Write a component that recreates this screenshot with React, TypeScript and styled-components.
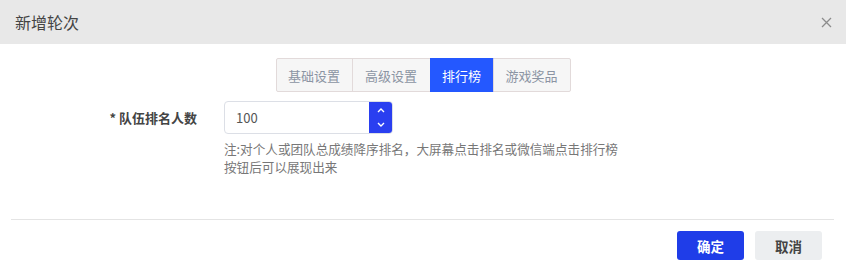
import React from "react";
import styled, { createGlobalStyle } from "styled-components";

const Global = createGlobalStyle`
  html, body { margin: 0; padding: 0; background: #fff; }
  body { font-family: "Noto Sans CJK SC", "Noto Sans", sans-serif; }
  * { box-sizing: border-box; }
`;

const Dialog = styled.div`
  width: 846px;
  height: 273px;
  background: #fff;
  display: flex;
  flex-direction: column;
`;

const Header = styled.div`
  height: 44px;
  background: #e8e8e8;
  display: flex;
  align-items: center;
  justify-content: space-between;
  padding: 0 14px 0 15px;
`;

const Title = styled.div`
  font-size: 16px;
  color: #444;
`;

const CloseBtn = styled.div`
  width: 12px;
  height: 12px;
  display: flex;
  align-items: center;
  justify-content: center;
`;

const Body = styled.div`
  display: flex;
  flex-direction: column;
  padding-top: 14px;
  flex: 1;
`;

const Tabs = styled.div`
  display: flex;
  justify-content: center;
  padding-left: 1px;
`;

const Tab = styled.div<{ $active?: boolean; $w: number }>`
  width: ${(p) => p.$w}px;
  height: 34px;
  display: flex;
  align-items: center;
  justify-content: center;
  font-size: 13px;
  color: ${(p) => (p.$active ? "#fff" : "#8b94a3")};
  background: ${(p) => (p.$active ? "#2458ff" : "#f6f6f6")};
  border: 1px solid ${(p) => (p.$active ? "#2458ff" : "#e2dada")};
  margin-left: -1px;
  &:first-child { border-radius: 2px 0 0 2px; }
  &:last-child { border-radius: 0 2px 2px 0; }
`;

const FormRow = styled.div`
  display: flex;
  margin-top: 9px;
`;

const Label = styled.div`
  width: 224px;
  padding-right: 27px;
  height: 33px;
  display: flex;
  align-items: center;
  justify-content: flex-end;
  font-size: 13px;
  font-weight: bold;
  color: #444;
`;

const FieldCol = styled.div`
  display: flex;
  flex-direction: column;
`;

const NumberInput = styled.div`
  width: 169px;
  height: 33px;
  display: flex;
  border: 1px solid #dcdfe6;
  border-radius: 4px;
  overflow: hidden;
`;

const InputText = styled.div`
  flex: 1;
  display: flex;
  align-items: center;
  padding-left: 11px;
  font-size: 13px;
  color: #555;
`;

const Spinner = styled.div`
  width: 24px;
  margin: -1px -1px -1px 0;
  background: #2a3ff0;
  border-radius: 0 4px 4px 0;
  display: flex;
  flex-direction: column;
  align-items: center;
  justify-content: space-around;
  padding: 3px 0;
`;

const Note = styled.div`
  margin-top: 6px;
  font-size: 12.6px;
  line-height: 18px;
  color: #777;
`;

const Divider = styled.div`
  margin: auto 12px 0 11px;
  height: 1px;
  background: #e4e4e4;
`;

const Footer = styled.div`
  display: flex;
  justify-content: flex-end;
  gap: 11px;
  padding: 11px 24px 13px 0;
`;

const Button = styled.div<{ $primary?: boolean }>`
  width: 67px;
  height: 29px;
  border-radius: 3px;
  display: flex;
  align-items: center;
  justify-content: center;
  font-size: 13.5px;
  font-weight: bold;
  background: ${(p) => (p.$primary ? "#1f3de8" : "#eceef0")};
  color: ${(p) => (p.$primary ? "#fff" : "#444")};
`;

const Chevron = ({ up }: { up?: boolean }) => (
  <svg width="8" height="5" viewBox="0 0 8 5">
    <path
      d={up ? "M1 4 L4 1 L7 4" : "M1 1 L4 4 L7 1"}
      fill="none"
      stroke="#fff"
      strokeWidth="1.4"
    />
  </svg>
);

export default function App() {
  return (
    <>
      <Global />
      <Dialog>
        <Header>
          <Title>新增轮次</Title>
          <CloseBtn>
            <svg width="11" height="11" viewBox="0 0 11 11">
              <path d="M1 1 L10 10 M10 1 L1 10" stroke="#8c8c8c" strokeWidth="1.3" />
            </svg>
          </CloseBtn>
        </Header>
        <Body>
          <Tabs>
            <Tab $w={77}>基础设置</Tab>
            <Tab $w={79}>高级设置</Tab>
            <Tab $w={64} $active>排行榜</Tab>
            <Tab $w={78}>游戏奖品</Tab>
          </Tabs>
          <FormRow>
            <Label>* 队伍排名人数</Label>
            <FieldCol>
              <NumberInput>
                <InputText>100</InputText>
                <Spinner>
                  <Chevron up />
                  <Chevron />
                </Spinner>
              </NumberInput>
              <Note>
                注:对个人或团队总成绩降序排名，大屏幕点击排名或微信端点击排行榜
                <br />
                按钮后可以展现出来
              </Note>
            </FieldCol>
          </FormRow>
          <Divider />
          <Footer>
            <Button $primary>确定</Button>
            <Button>取消</Button>
          </Footer>
        </Body>
      </Dialog>
    </>
  );
}
